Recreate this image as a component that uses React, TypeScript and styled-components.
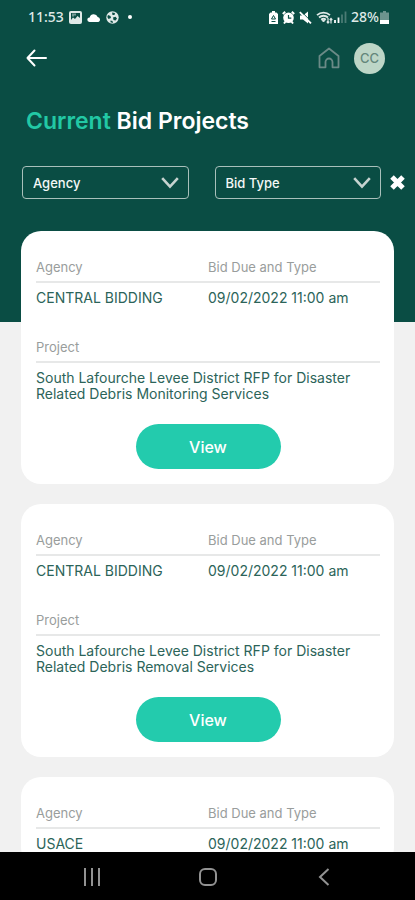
import React from "react";
import styled, { createGlobalStyle } from "styled-components";

const GlobalStyle = createGlobalStyle`
  *, *::before, *::after { box-sizing: border-box; }
  body {
    margin: 0;
    background: #f1f1f1;
    font-family: Inter, "Liberation Sans", sans-serif;
  }
  button, select { font-family: inherit; }
  h1, h2, p, dl, dt, dd, ul { margin: 0; padding: 0; }
`;

const Screen = styled.div`
  display: flex;
  flex-direction: column;
  height: 100vh;
`;

const Content = styled.main`
  flex: 1;
  min-height: 0;
  overflow-y: auto;
  scrollbar-width: none;
`;

const Hero = styled.header`
  padding-bottom: 123px;
  background: #0a4d44;
  color: #fff;
`;

const StatusBar = styled.div`
  display: flex;
  align-items: center;
  justify-content: space-between;
  height: 34px;
  padding: 0 26px 0 28px;
  font-family: "Noto Sans", sans-serif;
  font-size: 14px;
  font-weight: 500;
  line-height: 20px;
  color: #dfe9e7;
`;

const StatusGroup = styled.div<{ $gap: number }>`
  display: flex;
  align-items: center;
  gap: ${(p) => p.$gap}px;
`;

const Toolbar = styled.div`
  display: flex;
  align-items: center;
  justify-content: space-between;
  height: 48px;
  padding: 0 30px 0 25px;
`;

const ToolbarActions = styled.div`
  display: flex;
  align-items: center;
  gap: 13px;
`;

const IconButton = styled.button`
  display: flex;
  align-items: center;
  justify-content: center;
  flex: none;
  padding: 0;
  border: 0;
  background: none;
  color: inherit;
  cursor: pointer;
`;

const Avatar = styled(IconButton)`
  width: 31px;
  height: 31px;
  border-radius: 50%;
  background: #bdd6c7;
  color: #64877b;
  font-size: 13px;
  font-weight: 500;
`;

const Title = styled.h1`
  padding: 25px 26px 0;
  font-size: 23px;
  font-weight: 600;
  line-height: 28px;
`;

const TitleAccent = styled.span`
  color: #22c8a5;
`;

const Filters = styled.div`
  display: flex;
  align-items: center;
  gap: 9px;
  padding: 31px 10px 0 22px;
`;

const FilterFields = styled.div`
  display: grid;
  grid-template-columns: 1fr 1fr;
  gap: 26px;
  flex: 1;
`;

const FilterField = styled.div`
  display: grid;
  align-items: center;
  > * { grid-area: 1 / 1; }
  > svg {
    justify-self: end;
    margin-right: 10px;
    pointer-events: none;
  }
`;

const FilterSelect = styled.select`
  appearance: none;
  width: 100%;
  height: 33px;
  padding: 0 32px 0 10px;
  border: 1px solid #a9c0bb;
  border-radius: 4px;
  background: transparent;
  color: #f4f8f7;
  font-size: 13px;
  font-weight: 500;
`;

const CardList = styled.ul`
  display: flex;
  flex-direction: column;
  gap: 20px;
  margin-top: -91px;
  padding: 0 21px;
  list-style: none;
`;

const Card = styled.li`
  padding: 26px 14px 15px 15px;
  border-radius: 20px;
  background: #fff;
`;

const FieldRow = styled.dl<{ $columns: number }>`
  display: grid;
  grid-template-columns: repeat(${(p) => p.$columns}, 1fr);
  & + & { margin-top: 31px; }
`;

const FieldLabel = styled.dt`
  padding-bottom: 4px;
  border-bottom: 2px solid #e7e8e8;
  color: #999d9c;
  font-size: 13px;
  line-height: 20px;
`;

const FieldValue = styled.dd`
  padding-top: 7px;
  color: #2c6459;
  font-size: 14px;
  line-height: 16px;
`;

const ViewButton = styled.button`
  display: block;
  width: 145px;
  height: 45px;
  margin: 22px auto 0;
  border: 0;
  border-radius: 23px;
  background: #23cbad;
  color: #fff;
  font-size: 16px;
  font-weight: 500;
  cursor: pointer;
`;

const NavBar = styled.nav`
  display: grid;
  grid-template-columns: repeat(3, 116px);
  justify-content: center;
  flex: none;
  height: 48px;
  padding-top: 2px;
  background: #000;
  color: #929292;
`;

const ImageIcon = () => (
  <svg width="13" height="13" viewBox="0 0 13 13" aria-hidden="true">
    <rect width="13" height="13" rx="2" fill="currentColor" />
    <path d="M2 2h9v5L8.500 5 6 8 4 6.500 2 9z" fill="#0a4d44" />
    <path d="M4 2.500v3M6 2.500v2" stroke="currentColor" strokeWidth="1" />
  </svg>
);

const CloudIcon = () => (
  <svg width="14" height="9" viewBox="0 0 14 9" aria-hidden="true">
    <path d="M2.500 9A2.300 2.300 0 0 1 2.700 4.400 4.200 4.200 0 0 1 10.700 4 2.600 2.600 0 0 1 11.400 9z" fill="#fff" />
  </svg>
);

const BallIcon = () => (
  <svg width="13" height="13" viewBox="0 0 13 13" aria-hidden="true">
    <circle cx="6.500" cy="6.500" r="6.200" fill="currentColor" />
    <path d="M6 1.500 9 2 8.500 4 6.500 4zM2 4l2.500 1L5 7 2.500 8 1.300 6zM7 6.500l2.500-.8L11 7.500 9.500 9.500 7.500 9zM4.500 9.500l2 .5.500 2-2.500-.7z" fill="#0a4d44" />
  </svg>
);

const DotIcon = () => (
  <svg width="12" height="4" viewBox="0 0 12 4" aria-hidden="true">
    <circle cx="6" cy="2" r="2" fill="#fff" />
  </svg>
);

const BatterySaverIcon = () => (
  <svg width="9" height="13" viewBox="0 0 9 13" aria-hidden="true">
    <path d="M3 0h3v1.500h1.500L9 3v10H0V3l1.500-1.500H3z" fill="#fff" />
    <path d="M4.500 4.500 6.500 8h-4zM2.500 10.500h4" fill="none" stroke="#0a4d44" />
  </svg>
);

const AlarmIcon = () => (
  <svg width="13" height="13" viewBox="0 0 13 13" aria-hidden="true">
    <path d="M.8 3 3.200.8M12.200 3 9.800.8M2 12.500l1.500-2M11 12.500l-1.500-2" stroke="#fff" strokeWidth="2" />
    <circle cx="6.500" cy="6.800" r="5.300" fill="#fff" />
    <path d="M6.500 4v3.200h2.800" stroke="#0a4d44" strokeWidth="1.200" fill="none" />
  </svg>
);

const MuteIcon = () => (
  <svg width="13" height="13" viewBox="0 0 13 13" aria-hidden="true">
    <path d="M1 4.500h3L9 .5v12L4 8.500H1z" fill="#fff" />
    <path d="M2.500.8 12.800 11" stroke="#0a4d44" strokeWidth="1" />
    <path d="M.8 1.200 12 12.400" stroke="#fff" strokeWidth="1.800" />
  </svg>
);

const WifiIcon = () => (
  <svg width="17" height="13" viewBox="0 0 17 13" aria-hidden="true" fill="none" stroke="currentColor">
    <path d="M1 4.200a9.600 9.600 0 0 1 13 0M3 6.500a6.700 6.700 0 0 1 9 0M5.200 8.700a3.500 3.500 0 0 1 4.600 0" strokeWidth="1.800" />
    <path d="M6.200 9.500 7.500 11 8.800 9.500z" fill="currentColor" />
    <path d="M12 7v5M10.700 10.600 12 12l1.300-1.400M15 12.500v-5M13.700 9 15 7.500 16.300 9" strokeWidth="1.200" />
  </svg>
);

const SignalIcon = () => (
  <svg width="13" height="12" viewBox="0 0 13 12" aria-hidden="true">
    <path d="M1 12V9M4.500 12V6.500" stroke="#fff" strokeWidth="1.800" />
    <path d="M8 12V3.500M11.500 12V.5" stroke="#4a7b74" strokeWidth="1.800" />
  </svg>
);

const BatteryIcon = () => (
  <svg width="9" height="13" viewBox="0 0 9 13" aria-hidden="true">
    <path d="M3 0h3v1.500h3V13H0V1.500h3z" fill="#6d948e" />
    <path d="M0 9h9v4H0z" fill="#fff" />
  </svg>
);

const BackArrowIcon = () => (
  <svg width="24" height="24" viewBox="0 0 24 24" aria-hidden="true" fill="none" stroke="#fff" strokeWidth="2" strokeLinecap="round" strokeLinejoin="round">
    <path d="M21 12H2.500M9.500 4.500 2.500 12l7 7.500" />
  </svg>
);

const HomeIcon = () => (
  <svg width="24" height="24" viewBox="0 0 24 24" aria-hidden="true" fill="none" stroke="#6b8a87" strokeWidth="1.800" strokeLinejoin="round">
    <path d="M2.500 10 12 2.500 21.500 10v11.300h-6V16a3.500 3.500 0 0 0-7 0v5.300h-6z" />
  </svg>
);

const ChevronIcon = () => (
  <svg width="18" height="12" viewBox="0 0 18 12" aria-hidden="true" fill="none" stroke="#c6d3d0" strokeWidth="2.600">
    <path d="M1.200 1.200 9 9.700l7.800-8.500" />
  </svg>
);

const ClearIcon = () => (
  <svg width="15" height="15" viewBox="0 0 15 15" aria-hidden="true" stroke="#fff" strokeWidth="5">
    <path d="m2 2 11 11M13 2 2 13" />
  </svg>
);

const RecentsIcon = () => (
  <svg width="18" height="18" viewBox="0 0 18 18" aria-hidden="true" stroke="currentColor" strokeWidth="2">
    <path d="M2 0v18M9 0v18M16 0v18" />
  </svg>
);

const SystemHomeIcon = () => (
  <svg width="20" height="20" viewBox="0 0 20 20" aria-hidden="true" fill="none" stroke="currentColor" strokeWidth="2">
    <rect x="2" y="2" width="16" height="16" rx="5" />
  </svg>
);

const SystemBackIcon = () => (
  <svg width="12" height="18" viewBox="0 0 12 18" aria-hidden="true" fill="none" stroke="currentColor" strokeWidth="2">
    <path d="M10.500 1 2 9l8.500 8" />
  </svg>
);

interface Bid {
  id: number;
  agency: string;
  due: string;
  project?: string;
}

const bids: Bid[] = [
  {
    id: 1,
    agency: "CENTRAL BIDDING",
    due: "09/02/2022 11:00 am",
    project: "South Lafourche Levee District RFP for Disaster Related Debris Monitoring Services",
  },
  {
    id: 2,
    agency: "CENTRAL BIDDING",
    due: "09/02/2022 11:00 am",
    project: "South Lafourche Levee District RFP for Disaster Related Debris Removal Services",
  },
  { id: 3, agency: "USACE", due: "09/02/2022 11:00 am" },
];

const Filter = ({ label }: { label: string }) => (
  <FilterField>
    <FilterSelect aria-label={label} defaultValue="">
      <option value="">{label}</option>
    </FilterSelect>
    <ChevronIcon />
  </FilterField>
);

const BidCard = ({ bid }: { bid: Bid }) => (
  <Card>
    <FieldRow $columns={2}>
      <div>
        <FieldLabel>Agency</FieldLabel>
        <FieldValue>{bid.agency}</FieldValue>
      </div>
      <div>
        <FieldLabel>Bid Due and Type</FieldLabel>
        <FieldValue>{bid.due}</FieldValue>
      </div>
    </FieldRow>
    {bid.project && (
      <>
        <FieldRow $columns={1}>
          <div>
            <FieldLabel>Project</FieldLabel>
            <FieldValue>{bid.project}</FieldValue>
          </div>
        </FieldRow>
        <ViewButton type="button">View</ViewButton>
      </>
    )}
  </Card>
);

export default function App() {
  return (
    <>
      <GlobalStyle />
      <Screen>
        <Content>
          <Hero>
            <StatusBar>
              <StatusGroup $gap={5}>
                <span>11:53</span>
                <ImageIcon />
                <CloudIcon />
                <BallIcon />
                <DotIcon />
              </StatusGroup>
              <StatusGroup $gap={4}>
                <BatterySaverIcon />
                <AlarmIcon />
                <MuteIcon />
                <StatusGroup $gap={1}>
                  <WifiIcon />
                  <SignalIcon />
                </StatusGroup>
                <StatusGroup $gap={1}>
                  <span>28%</span>
                  <BatteryIcon />
                </StatusGroup>
              </StatusGroup>
            </StatusBar>
            <Toolbar>
              <IconButton type="button" aria-label="Back">
                <BackArrowIcon />
              </IconButton>
              <ToolbarActions>
                <IconButton type="button" aria-label="Home">
                  <HomeIcon />
                </IconButton>
                <Avatar type="button">CC</Avatar>
              </ToolbarActions>
            </Toolbar>
            <Title>
              <TitleAccent>Current</TitleAccent> Bid Projects
            </Title>
            <Filters>
              <FilterFields>
                <Filter label="Agency" />
                <Filter label="Bid Type" />
              </FilterFields>
              <IconButton type="button" aria-label="Clear filters">
                <ClearIcon />
              </IconButton>
            </Filters>
          </Hero>
          <CardList>
            {bids.map((bid) => (
              <BidCard key={bid.id} bid={bid} />
            ))}
          </CardList>
        </Content>
        <NavBar aria-label="System">
          <IconButton type="button" aria-label="Recent apps">
            <RecentsIcon />
          </IconButton>
          <IconButton type="button" aria-label="Home screen">
            <SystemHomeIcon />
          </IconButton>
          <IconButton type="button" aria-label="System back">
            <SystemBackIcon />
          </IconButton>
        </NavBar>
      </Screen>
    </>
  );
}
